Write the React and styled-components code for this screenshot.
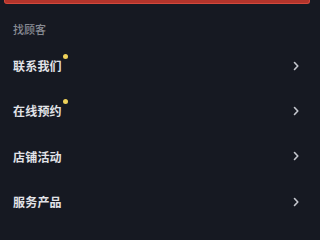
import React from "react";
import styled, { createGlobalStyle } from "styled-components";

const GlobalStyle = createGlobalStyle`
  body {
    margin: 0;
    background: #161922;
    font-family: "Noto Sans CJK SC", "Noto Sans", sans-serif;
  }
`;

const Page = styled.div`
  width: 320px;
  height: 240px;
  overflow: hidden;
  background: #161922;
`;

const TopBar = styled.div`
  height: 3px;
  margin: 0 10px 0 4px;
  background: #b3342b;
  border: 1px solid #d2483c;
  border-top: none;
  border-radius: 0 0 3px 3px;
`;

const SectionTitle = styled.div`
  padding: 15px 0 0 13px;
  height: 20px;
  font-size: 11px;
  font-weight: 500;
  line-height: 20px;
  color: #878a93;
`;

const List = styled.div`
  display: flex;
  flex-direction: column;
  margin-top: 4px;
`;

const Row = styled.div`
  height: 45.3px;
  display: flex;
  align-items: center;
  justify-content: space-between;
  padding: 0 20px 0 13px;
`;

const Label = styled.span`
  position: relative;
  font-size: 12px;
  font-weight: 700;
  color: #e2e3e8;
  letter-spacing: 0.2px;
`;

const Dot = styled.span`
  position: absolute;
  right: -6px;
  top: -3px;
  width: 5px;
  height: 5px;
  border-radius: 50%;
  background: #efd25a;
`;

const Chevron = () => (
  <svg width="8" height="10" viewBox="0 0 8 10">
    <path
      d="M2.5 1.5 L5.8 5 L2.5 8.5"
      fill="none"
      stroke="#c4c6cd"
      strokeWidth="1.6"
      strokeLinecap="round"
      strokeLinejoin="round"
    />
  </svg>
);

const items = [
  { label: "联系我们", dot: true },
  { label: "在线预约", dot: true },
  { label: "店铺活动" },
  { label: "服务产品" },
];

export default function App() {
  return (
    <Page>
      <GlobalStyle />
      <TopBar />
      <SectionTitle>找顾客</SectionTitle>
      <List>
        {items.map((it) => (
          <Row key={it.label}>
            <Label>
              {it.label}
              {it.dot && <Dot />}
            </Label>
            <Chevron />
          </Row>
        ))}
      </List>
    </Page>
  );
}
